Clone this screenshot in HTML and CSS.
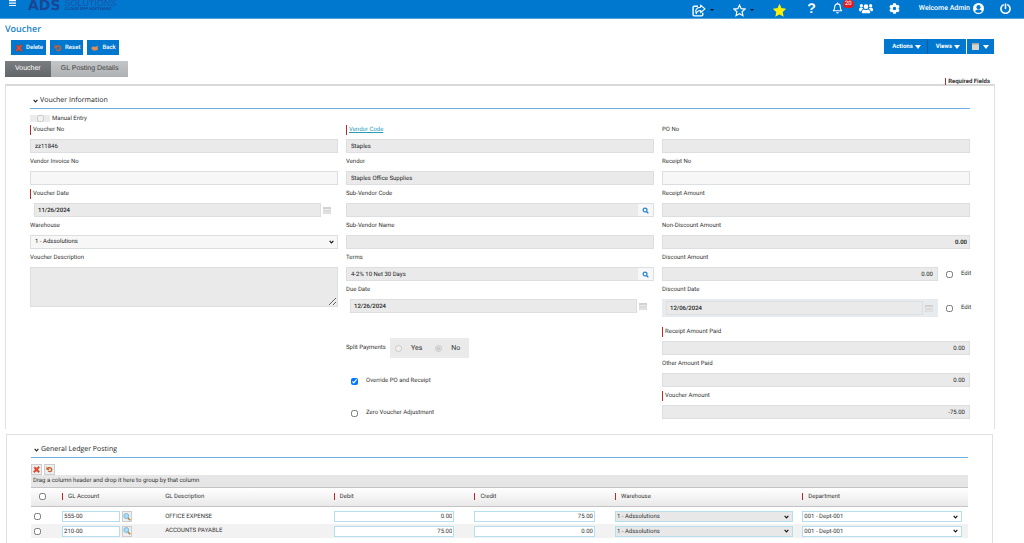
FILE: index.html
```html
<!DOCTYPE html>
<html lang="en">
<head>
  <meta charset="UTF-8">
  <meta name="viewport" content="width=device-width, initial-scale=1.0">
  <title>Voucher</title>
  <link rel="stylesheet" href="styles.css">
</head>
<body>
  <!-- shared icons -->
  <svg class="sprite" aria-hidden="true">
    <symbol id="cross" viewBox="0 0 16 16"><path d="M2 4l3-2 3 3 4-4 3 2-4 5 4 5-3 2-4-4-4 4-3-2 4-5z" fill="#ef4a2c" stroke="#a3341f"/></symbol>
    <symbol id="undo" viewBox="0 0 16 16"><path d="M4 4h5a4.500 4.500 0 1 1-4 7" fill="none" stroke="#c9602f" stroke-width="3"/><path d="M1 1v8h8z" fill="#c9602f"/></symbol>
    <symbol id="search" viewBox="0 0 16 16"><circle cx="7" cy="7" r="4.500" fill="none" stroke="currentColor" stroke-width="2.600"/><path d="M10 10l4.500 4.500" stroke="currentColor" stroke-width="3"/></symbol>
    <symbol id="calendar" viewBox="0 0 16 14"><path d="M0 0h16v14H0z" fill="#d2d2d2"/><path d="M1 4h14v9H1z" fill="#ececec"/><path d="M3 6h2v5H3zM7 6h2v5H7zM11 6h2v5h-2z" fill="#c9c9c9"/></symbol>
    <symbol id="chevron" viewBox="0 0 12 8"><path d="M1.500 1.500L6 6l4.500-4.500" fill="none" stroke="currentColor" stroke-width="2.800"/></symbol>
    <symbol id="lens" viewBox="0 0 16 16"><path d="M9.500 9.500l5 5" stroke="#b3813f" stroke-width="3"/><circle cx="6.500" cy="6" r="5" fill="#a9dcf7" stroke="#6ea9cf" stroke-width="1.500"/></symbol>
    <symbol id="star" viewBox="0 0 24 24"><path d="M12 2l3 6.600 7.200.800-5.400 4.900 1.500 7.200L12 17.900l-6.300 3.600 1.500-7.200L1.800 9.400 9 8.600z"/></symbol>
  </svg>

  <header class="topbar">
    <button class="menu" aria-label="Menu"><svg viewBox="0 0 14 12"><path d="M0 1h14M0 6h14M0 11h14" stroke="#fff" stroke-width="2.500"/></svg></button>
    <div class="logo">
      <span class="logo-mark">ADS</span>
      <span class="logo-text">
        <span class="logo-name">SOLUTIONS</span>
        <span class="logo-tag">CLOUD ERP SOFTWARE</span>
      </span>
    </div>
    <nav class="shortcuts">
      <button class="drop" aria-label="Share">
        <svg class="ico wide" viewBox="0 0 26 24"><path d="M11 4H4q-2 0-2 2v14q0 2 2 2h14q2 0 2-2v-4" fill="none" stroke="#fff" stroke-width="2.600"/><path d="M16 2l8 7-8 7v-4c-5 0-7 1-8 6-3-6 0-12 8-12z" fill="none" stroke="#fff" stroke-width="2.200" stroke-linejoin="round"/></svg>
        <span class="caret"></span>
      </button>
      <button class="drop" aria-label="Favorites">
        <svg class="ico" fill="none" stroke="#fff" stroke-width="2.200"><use href="#star"/></svg>
        <span class="caret"></span>
      </button>
      <button aria-label="Add favorite"><svg class="ico" fill="#fff200" stroke="#fff200" stroke-width="2"><use href="#star"/></svg></button>
    </nav>
    <nav class="account">
      <button class="help" aria-label="Help">?</button>
      <button class="bell" aria-label="Notifications">
        <svg viewBox="0 0 24 26"><path d="M3 19c3-3 3-5 3-9a6 6 0 0 1 12 0c0 4 0 6 3 9z" fill="none" stroke="#fff" stroke-width="2.400" stroke-linejoin="round"/><path d="M12 1v3" stroke="#fff" stroke-width="2.400"/><path d="M9 22h6a3 3 0 0 1-6 0z" fill="#fff"/></svg>
        <span class="badge">20</span>
      </button>
      <button aria-label="Users"><svg class="ico wide" viewBox="0 0 30 24" fill="#fff"><circle cx="15" cy="8" r="5"/><path d="M6 22c0-6 2-8 5-8q4 2.500 8 0c3 0 5 2 5 8z"/><circle cx="5" cy="6" r="3.500"/><circle cx="25" cy="6" r="3.500"/><path d="M0 16c0-4 1-6 4-6 2 0 4 1 5 3-3 0-4 3-4 5H2q-2 0-2-2zM30 16c0-4-1-6-4-6-2 0-4 1-5 3 3 0 4 3 4 5h3q2 0 2-2z"/></svg></button>
      <button aria-label="Settings"><svg class="ico small" viewBox="0 0 512 512" fill="#fff"><path d="M487.400 315.700l-42.600-24.600c4.300-23.200 4.300-47 0-70.200l42.600-24.600c4.900-2.800 7.100-8.600 5.500-14-11.100-35.600-30-67.800-54.700-94.600-3.800-4.100-10-5.100-14.800-2.300L380.800 110c-17.900-15.400-38.500-27.300-60.800-35.100V25.800c0-5.600-3.900-10.500-9.400-11.700-36.700-8.200-74.300-7.800-109.200 0-5.500 1.200-9.400 6.100-9.400 11.700V75c-22.200 7.900-42.800 19.800-60.800 35.100L88.700 85.500c-4.900-2.800-11-1.900-14.800 2.300-24.700 26.700-43.600 58.900-54.700 94.600-1.700 5.400.6 11.200 5.500 14L67.300 221c-4.300 23.200-4.300 47 0 70.200l-42.600 24.600c-4.900 2.800-7.100 8.600-5.500 14 11.100 35.600 30 67.800 54.700 94.600 3.800 4.100 10 5.100 14.800 2.300l42.600-24.600c17.900 15.400 38.500 27.300 60.800 35.100v49.200c0 5.600 3.900 10.500 9.400 11.700 36.700 8.200 74.300 7.800 109.200 0 5.500-1.200 9.400-6.100 9.400-11.700v-49.200c22.200-7.900 42.800-19.800 60.800-35.100l42.600 24.600c4.900 2.800 11 1.900 14.800-2.300 24.700-26.700 43.600-58.900 54.700-94.600 1.500-5.500-.7-11.300-5.600-14.100zM256 336c-44.100 0-80-35.900-80-80s35.900-80 80-80 80 35.900 80 80-35.900 80-80 80z"/></svg></button>
      <button class="user">Welcome Admin <svg class="ico small" viewBox="0 0 24 24"><circle cx="12" cy="12" r="12" fill="#fff"/><circle cx="12" cy="9" r="4.500" fill="#0078cf"/><path d="M4.500 18c2-5 13-5 15 0-4 4.500-11 4.500-15 0z" fill="#0078cf"/></svg></button>
      <button aria-label="Log out"><svg class="ico small" viewBox="0 0 24 24" fill="none" stroke="#fff" stroke-width="3.400" stroke-linecap="round"><path d="M7 4a10 10 0 1 0 10 0M12 2v10"/></svg></button>
    </nav>
  </header>

  <main>
    <h1>Voucher</h1>
    <div class="toolbar">
      <div class="buttons">
        <button class="btn"><svg><use href="#cross"/></svg>Delete</button>
        <button class="btn"><svg><use href="#undo"/></svg>Reset</button>
        <button class="btn"><svg viewBox="0 0 16 16"><path d="M0 8l6-4v2l9-2-2 3 1 4-4 2H4z" fill="#e58b52"/></svg>Back</button>
      </div>
      <div class="menus">
        <button>Actions <span class="tri"></span></button>
        <button>Views <span class="tri"></span></button>
        <button class="layout" aria-label="Layout"><svg viewBox="0 0 14 14"><path d="M0 0h14v14H0z" fill="#d8d4cc"/><path d="M0 0h14v3H0z" fill="#a9a49a"/></svg><span class="tri"></span></button>
      </div>
    </div>

    <div class="tabs">
      <button class="tab active">Voucher</button>
      <button class="tab">GL Posting Details</button>
    </div>
    <p class="required-note"><span class="req">Required Fields</span></p>

    <section class="panel info">
      <h2><svg><use href="#chevron"/></svg>Voucher Information</h2>
      <div class="columns">
        <div class="column">
          <div class="manual">
            <span class="manual-box"><input type="checkbox" id="manual" disabled></span>
            <label for="manual">Manual Entry</label>
          </div>
          <div class="field">
            <label class="req" for="voucher-no">Voucher No</label>
            <input type="text" id="voucher-no" value="zz11846" readonly>
          </div>
          <div class="field">
            <label for="invoice-no">Vendor Invoice No</label>
            <input type="text" id="invoice-no" class="editable">
          </div>
          <div class="field">
            <label class="req" for="voucher-date">Voucher Date</label>
            <div class="date"><input type="text" id="voucher-date" value="11/26/2024" readonly><svg><use href="#calendar"/></svg></div>
          </div>
          <div class="field">
            <label for="warehouse">Warehouse</label>
            <select id="warehouse"><option>1 - Adssolutions</option></select>
          </div>
          <div class="field">
            <label for="description">Voucher Description</label>
            <textarea id="description" readonly></textarea>
          </div>
        </div>

        <div class="column">
          <div class="field">
            <label class="req" for="vendor-code"><a href="#">Vendor Code</a></label>
            <input type="text" id="vendor-code" value="Staples" readonly>
          </div>
          <div class="field">
            <label for="vendor">Vendor</label>
            <input type="text" id="vendor" value="Staples Office Supplies" readonly>
          </div>
          <div class="field">
            <label for="sub-code">Sub-Vendor Code</label>
            <div class="lookup"><input type="text" id="sub-code" readonly><button aria-label="Find sub-vendor"><svg><use href="#search"/></svg></button></div>
          </div>
          <div class="field">
            <label for="sub-name">Sub-Vendor Name</label>
            <input type="text" id="sub-name" readonly>
          </div>
          <div class="field">
            <label for="terms">Terms</label>
            <div class="lookup"><input type="text" id="terms" value="4-2% 10 Net 30 Days" readonly><button aria-label="Find terms"><svg><use href="#search"/></svg></button></div>
          </div>
          <div class="field">
            <label for="due-date">Due Date</label>
            <div class="date"><input type="text" id="due-date" value="12/26/2024" readonly><svg><use href="#calendar"/></svg></div>
          </div>
          <div class="split">
            <span>Split Payments</span>
            <div class="radios">
              <input type="radio" name="split" id="split-yes" disabled><label for="split-yes">Yes</label>
              <input type="radio" name="split" id="split-no" checked disabled><label for="split-no">No</label>
            </div>
          </div>
          <div class="check"><input type="checkbox" id="override" checked><label for="override">Override PO and Receipt</label></div>
          <div class="check"><input type="checkbox" id="zero"><label for="zero">Zero Voucher Adjustment</label></div>
        </div>

        <div class="column">
          <div class="field">
            <label for="po-no">PO No</label>
            <input type="text" id="po-no" readonly>
          </div>
          <div class="field">
            <label for="receipt-no">Receipt No</label>
            <input type="text" id="receipt-no" class="editable">
          </div>
          <div class="field">
            <label for="receipt-amount">Receipt Amount</label>
            <input type="text" id="receipt-amount" readonly>
          </div>
          <div class="field">
            <label for="non-discount">Non-Discount Amount</label>
            <input type="text" id="non-discount" class="amount strong" value="0.00" readonly>
          </div>
          <div class="field">
            <label for="discount-amount">Discount Amount</label>
            <div class="with-edit">
              <input type="text" id="discount-amount" class="amount" value="0.00" readonly>
              <input type="checkbox" id="edit-amount"><label for="edit-amount">Edit</label>
            </div>
          </div>
          <div class="field discount-date">
            <label for="discount-date">Discount Date</label>
            <div class="with-edit">
              <div class="date boxed"><input type="text" id="discount-date" value="12/06/2024" readonly><svg><use href="#calendar"/></svg></div>
              <input type="checkbox" id="edit-date"><label for="edit-date">Edit</label>
            </div>
          </div>
          <div class="field">
            <label class="req" for="receipt-paid">Receipt Amount Paid</label>
            <input type="text" id="receipt-paid" class="amount" value="0.00" readonly>
          </div>
          <div class="field">
            <label for="other-paid">Other Amount Paid</label>
            <input type="text" id="other-paid" class="amount" value="0.00" readonly>
          </div>
          <div class="field">
            <label class="req" for="voucher-amount">Voucher Amount</label>
            <input type="text" id="voucher-amount" class="amount" value="-75.00" readonly>
          </div>
        </div>
      </div>
    </section>

    <section class="panel ledger">
      <h2><svg><use href="#chevron"/></svg>General Ledger Posting</h2>
      <div class="grid-tools">
        <button aria-label="Delete row"><svg><use href="#cross"/></svg></button>
        <button aria-label="Undo"><svg><use href="#undo"/></svg></button>
      </div>
      <div class="group-bar">Drag a column header and drop it here to group by that column</div>
      <table>
        <colgroup>
          <col class="c-check"><col class="c-account"><col class="c-desc"><col class="c-money"><col class="c-money"><col class="c-warehouse"><col>
        </colgroup>
        <thead>
          <tr>
            <th><input type="checkbox" aria-label="Select all"></th>
            <th><span class="req">GL Account</span></th>
            <th>GL Description</th>
            <th><span class="req">Debit</span></th>
            <th><span class="req">Credit</span></th>
            <th><span class="req">Warehouse</span></th>
            <th><span class="req">Department</span></th>
          </tr>
        </thead>
        <tbody>
          <tr>
            <td><input type="checkbox" aria-label="Select row"></td>
            <td><div class="account-cell"><input type="text" aria-label="GL Account" value="555-00"><button aria-label="Find account"><svg><use href="#lens"/></svg></button></div></td>
            <td>OFFICE EXPENSE</td>
            <td><input type="text" class="amount" aria-label="Debit" value="0.00"></td>
            <td><input type="text" class="amount" aria-label="Credit" value="75.00"></td>
            <td><select class="locked" aria-label="Warehouse"><option>1 - Adssolutions</option></select></td>
            <td><select aria-label="Department"><option>001 - Dept-001</option></select></td>
          </tr>
          <tr>
            <td><input type="checkbox" aria-label="Select row"></td>
            <td><div class="account-cell"><input type="text" aria-label="GL Account" value="210-00"><button aria-label="Find account"><svg><use href="#lens"/></svg></button></div></td>
            <td>ACCOUNTS PAYABLE</td>
            <td><input type="text" class="amount" aria-label="Debit" value="75.00"></td>
            <td><input type="text" class="amount" aria-label="Credit" value="0.00"></td>
            <td><select class="locked" aria-label="Warehouse"><option>1 - Adssolutions</option></select></td>
            <td><select aria-label="Department"><option>001 - Dept-001</option></select></td>
          </tr>
        </tbody>
      </table>
    </section>
  </main>
  <footer></footer>
</body>
</html>
```
FILE: styles.css
```css
* {
  box-sizing: border-box;
}
body {
  margin: 0;
  font-family: Roboto, "Open Sans", sans-serif;
  font-size: 6px;
  line-height: 10px;
  text-rendering: geometricPrecision;
  color: #333;
  background: #fff;
}
button, input, select, textarea {
  font: inherit;
  color: inherit;
  text-rendering: inherit;
  margin: 0;
}
button {
  padding: 0;
  border: none;
  background: none;
  cursor: pointer;
}
svg {
  display: block;
  flex: none;
}
.sprite {
  display: none;
}
input[type="checkbox"], input[type="radio"] {
  width: 7px;
  height: 7px;
  flex: none;
}

/* top bar */
.topbar {
  display: flex;
  height: 19px;
  padding: 0 13px 0 9px;
  background: #0078cf;
  border-bottom: 1px solid #4fa3dd;
}
.menu {
  align-self: flex-start;
}
.menu svg {
  width: 7px;
  height: 6px;
}
.logo {
  display: flex;
  align-items: flex-start;
  gap: 4px;
  margin-left: 12px;
  color: #1b4696;
  font-family: "Liberation Sans", Arial, sans-serif;
}
.logo-mark {
  font-family: "DejaVu Sans", sans-serif;
  font-size: 14px;
  line-height: 12px;
  font-weight: bold;
}
.logo-text {
  display: flex;
  flex-direction: column;
}
.logo-name {
  font-size: 9px;
  line-height: 7px;
  color: #1f53a3;
}
.logo-tag {
  font-size: 4px;
  line-height: 4px;
  font-weight: bold;
}
.shortcuts, .account {
  display: flex;
  align-items: center;
}
.shortcuts {
  gap: 19px;
  margin-left: auto;
  padding-top: 2px;
}
.account {
  gap: 16px;
  margin-left: 21px;
  height: 16px;
}
.drop {
  display: flex;
  align-items: center;
  gap: 4px;
}
.ico {
  width: 13px;
  height: 13px;
}
.ico.wide {
  width: 14px;
}
.ico.small {
  width: 11px;
  height: 11px;
}
.caret {
  border: 2px solid transparent;
  border-top-color: #111;
  border-bottom: none;
}
.help {
  color: #fff;
  font-family: "Liberation Sans", Arial, sans-serif;
  font-size: 14px;
  line-height: 16px;
  font-weight: bold;
}
.bell {
  position: relative;
}
.bell svg {
  width: 11px;
  height: 12px;
}
.badge {
  position: absolute;
  left: 11px;
  top: -2px;
  width: 11px;
  height: 8px;
  border-radius: 4px;
  background: #e01b22;
  color: #fff;
  line-height: 8px;
}
.user {
  display: flex;
  align-items: center;
  gap: 3px;
  padding-left: 3px;
  color: #fff;
  font-size: 7px;
  font-weight: 500;
}

/* page heading and toolbar */
main {
  padding: 3px 29px 0 5px;
}
h1, h2 {
  font-family: "Open Sans", "Noto Sans", sans-serif;
}
h1 {
  margin: 0;
  font-size: 9px;
  line-height: 14px;
  font-weight: 600;
  color: #1583c9;
}
.toolbar {
  display: flex;
  justify-content: space-between;
  align-items: flex-start;
  padding: 3px 1px 6px 6px;
}
.buttons {
  display: flex;
  gap: 4px;
  padding-top: 1px;
}
.btn {
  display: flex;
  align-items: center;
  gap: 3px;
  height: 15px;
  padding: 0 3px 0 4px;
  background: #0078cf;
  color: #fff;
  font-weight: 500;
}
.btn svg {
  width: 8px;
  height: 8px;
}
.menus {
  display: flex;
}
.menus button {
  display: flex;
  align-items: center;
  gap: 2px;
  height: 15px;
  padding: 0 6px 0 8px;
  background: #0078cf;
  color: #fff;
  font-weight: 700;
}
.menus button + button {
  border-left: 1px solid #1c5c9c;
}
.menus .layout {
  margin-left: 1px;
  border-left: none;
  gap: 4px;
  padding: 0 5px;
}
.menus .layout svg {
  width: 7px;
  height: 7px;
}
.tri {
  border: 3px solid transparent;
  border-top: 4px solid #fff;
  border-bottom: none;
}
.tabs {
  display: flex;
}
.tab {
  height: 16px;
  padding: 0 10px;
  font-family: "Liberation Sans", Arial, sans-serif;
  font-size: 7px;
  color: #444;
  background: linear-gradient(#c4c5c7, #aeb1b4);
}
.tab.active {
  color: #fff;
  background: linear-gradient(#7b7d80, #636669);
}
.required-note {
  margin: 0;
  padding: 0 5px;
  height: 7px;
  text-align: right;
  font-weight: 700;
}
.req {
  border-left: 1px solid #b52a2a;
  padding-left: 2px;
}

/* panels */
.panel {
  border: 1px solid #e0e1e3;
  border-bottom: none;
}
.info {
  border-top: 2px solid #d9d9d9;
  padding: 8px 24px 0;
}
.panel h2 {
  display: flex;
  align-items: center;
  gap: 2px;
  margin: 0;
  padding: 1px 3px;
  border-bottom: 1px solid #6bb0e2;
  font-size: 7px;
  line-height: 12px;
  font-weight: 500;
  color: #222;
}
.panel h2 svg {
  width: 5px;
  height: 4px;
}
.columns {
  display: grid;
  grid-template-columns: repeat(3, 1fr);
  gap: 8px;
  padding-top: 16px;
}
.manual {
  display: flex;
  align-items: center;
  gap: 2px;
  height: 11px;
  margin: -12px 0 1px;
}
.manual-box {
  display: flex;
  justify-content: center;
  width: 20px;
  background: #ebebeb;
}
.field {
  min-height: 32px;
}
.field > label {
  display: block;
  width: max-content;
  margin-bottom: 4px;
}
.field a {
  color: #2a9ab8;
}
.field input[type="text"], .field select, .field textarea {
  display: block;
  width: 100%;
  height: 14px;
  padding: 0 4px;
  border: 1px solid #dcdfe2;
  border-radius: 0;
  background: #eaeaea;
  color: #222;
}
.field input.editable, .field select {
  background-color: #f7f7f7;
}
.field textarea {
  height: 40px;
}
.amount {
  text-align: right;
}
.field input.strong {
  padding-right: 2px;
  font-weight: 600;
}
select, .field select {
  appearance: none;
  background-image: url("data:image/svg+xml,%3Csvg xmlns='http://www.w3.org/2000/svg' viewBox='0 0 12 8'%3E%3Cpath d='M1.500 1.500L6 6l4.500-4.500' fill='none' stroke='%23111' stroke-width='2.800'/%3E%3C/svg%3E");
  background-repeat: no-repeat;
  background-position: right 3px center;
  background-size: 5px 4px;
}
.date {
  display: flex;
  align-items: center;
  gap: 2px;
  padding: 0 7px 0 4px;
}
.date input[type="text"] {
  flex: 1;
  padding: 0 3px;
  font-weight: 500;
}
.date svg {
  width: 8px;
  height: 7px;
}
.lookup {
  display: flex;
  border: 1px solid #dcdfe2;
  height: 14px;
}
.lookup input[type="text"] {
  flex: 1;
  height: 12px;
  border: none;
}
.lookup button {
  padding: 0 4px;
  background: #f7f7f7;
  color: #1a7fd4;
}
.lookup svg {
  width: 7px;
  height: 7px;
}
.with-edit {
  display: grid;
  grid-template-columns: 1fr 7px 9px;
  align-items: center;
  column-gap: 8px;
}
.boxed {
  height: 18px;
  padding: 0 5px 0 4px;
  background: #e8ebee;
}
.discount-date {
  min-height: 42px;
}
.split {
  display: flex;
  align-items: center;
  gap: 4px;
  margin: 21px 0 7px;
}
.radios {
  display: flex;
  align-items: center;
  height: 20px;
  padding: 0 9px 0 5px;
  background: #eaeaea;
  font-size: 7px;
}
.radios label {
  padding: 0 13px 0 9px;
}
.radios label:last-child {
  padding-right: 0;
}
.check {
  display: flex;
  align-items: center;
  gap: 8px;
  height: 32px;
  padding-left: 5px;
}

/* ledger grid */
.ledger {
  margin: 5px 2px 0 1px;
  padding: 8px 24px 5px;
}
.grid-tools {
  display: flex;
  gap: 2px;
  padding-top: 6px;
}
.grid-tools button, .account-cell button {
  padding: 1px;
  border: 1px solid #ccc;
  background: #eee;
}
.grid-tools svg {
  width: 7px;
  height: 7px;
}
.group-bar {
  padding: 1px 2px;
  border-bottom: 1px solid #c4c4c4;
  background: #e6e6e6;
}
table {
  width: 100%;
  table-layout: fixed;
  border-collapse: collapse;
}
.c-check {
  width: 3%;
}
.c-account {
  width: 11%;
}
.c-desc {
  width: 18%;
}
.c-money {
  width: 15%;
}
.c-warehouse {
  width: 20%;
}
th, td {
  padding: 0 6px 0 3px;
  text-align: left;
  font-weight: 400;
}
th {
  height: 18px;
  background: linear-gradient(#fff, #e9e9e9);
  border-bottom: 1px solid #c4c4c4;
}
th .req {
  padding-left: 5px;
}
th:first-child {
  padding-left: 8px;
}
td {
  height: 14px;
}
tbody tr:first-child td {
  height: 18px;
  padding-top: 3px;
}
tbody tr:nth-child(2) {
  background: #f2f2f2;
}
td > input, th > input {
  display: block;
}
td input[type="text"], td select {
  display: block;
  width: 100%;
  height: 11px;
  padding: 0 1px;
  border: 1px solid #b5dfec;
  border-radius: 0;
  background-color: #fff;
}
td:nth-child(4), td:nth-child(5) {
  padding-right: 17px;
}
td .locked {
  background-color: #e8e8e8;
}
.account-cell {
  display: flex;
  gap: 2px;
}
.account-cell input[type="text"] {
  width: 58px;
}
.account-cell button {
  padding: 0;
}
.account-cell svg {
  width: 8px;
  height: 8px;
}
footer {
  border-top: 1px solid #eee;
}
```
